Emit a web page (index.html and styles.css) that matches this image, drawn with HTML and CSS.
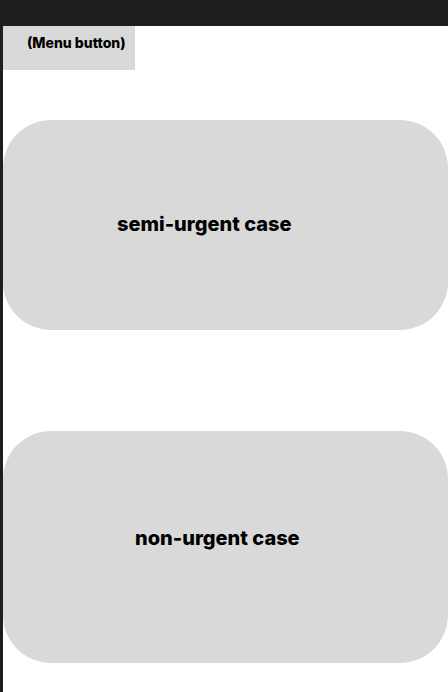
FILE: index.html
```html
<!DOCTYPE html>
<html>
<head>
<meta charset="utf-8">
<link rel="stylesheet" href="styles.css">
</head>
<body>
<div class="topbar"></div>
<main class="canvas">
  <div class="menu-button">(Menu button)</div>
  <div class="case case-semi">semi-urgent case</div>
  <div class="case case-non">non-urgent case</div>
</main>
</body>
</html>
```
FILE: styles.css
```css
html, body {
  margin: 0;
  padding: 0;
  height: 100%;
}
body {
  background: #1e1e1e;
  font-family: Inter, "Noto Sans", sans-serif;
  color: #000;
  display: flex;
  flex-direction: column;
}
.topbar {
  height: 26px;
  flex: none;
}
.canvas {
  flex: 1;
  margin-left: 3px;
  background: #fff;
  display: flex;
  flex-direction: column;
}
.menu-button {
  width: 108px;
  background: #d9d9d9;
  padding-left: 24px;
  box-sizing: content-box;
  font-size: 14px;
  font-weight: 800;
  line-height: 1;
  padding-top: 10px;
  height: 34px;
}
.case {
  background: #d9d9d9;
  border-radius: 48px;
  display: flex;
  align-items: center;
  font-size: 20px;
  font-weight: 800;
  box-sizing: border-box;
}
.case-semi {
  margin-top: 50px;
  height: 210px;
  padding-left: 114px;
  padding-bottom: 2px;
}
.case-non {
  margin-top: 101px;
  height: 232px;
  padding-left: 132px;
  padding-bottom: 18px;
}
```
